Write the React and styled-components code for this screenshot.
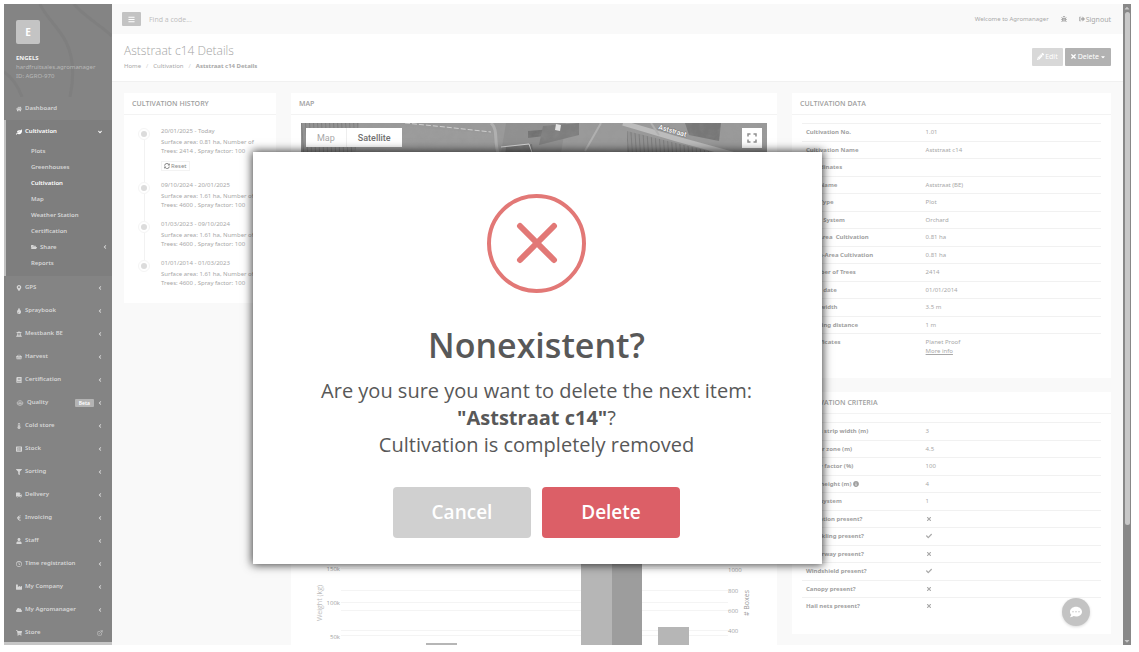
import React from "react";
import styled, { createGlobalStyle, css } from "styled-components";
import {
  FaHome,
  FaLeaf,
  FaFolderOpen,
  FaMapMarkerAlt,
  FaTint,
  FaUniversity,
  FaShoppingBasket,
  FaBook,
  FaThermometerHalf,
  FaListAlt,
  FaFilter,
  FaTruck,
  FaEuroSign,
  FaUser,
  FaRegClock,
  FaIndustry,
  FaCloud,
  FaShoppingCart,
  FaAngleLeft,
  FaAngleDown,
  FaBars,
  FaBug,
  FaSignOutAlt,
  FaPencilAlt,
  FaTimes,
  FaCheck,
  FaCaretDown,
  FaCaretUp,
  FaSyncAlt,
  FaInfoCircle,
  FaCommentDots,
} from "react-icons/fa";
import { FiExternalLink } from "react-icons/fi";

const GlobalStyle = createGlobalStyle`
  *,
  *::before {
    box-sizing: border-box;
  }

  body {
    margin: 0;
    background: #fff;
    color: #a8a8a8;
    font-family: "Noto Sans", "Open Sans", sans-serif;
    font-size: 6px;
    line-height: 9px;
  }

  button,
  input {
    font-family: inherit;
  }

  a {
    color: inherit;
    text-decoration: none;
  }
`;

const Frame = styled.div`
  position: relative;
  display: flex;
  height: calc(100vh - 11px);
  margin: 4px 8px 7px 4px;
  overflow: hidden;
`;

/* ---------- sidebar ---------- */

const Sidebar = styled.aside`
  display: flex;
  flex-direction: column;
  flex: 0 0 108px;
  background: #848484;
  border-bottom: 3px solid #c6c6c6;
  overflow: hidden;
`;

const Profile = styled.div`
  position: relative;
  flex: 0 0 93px;
  padding: 16px 12px 0;
  color: #b8b8b8;
`;

const ProfilePattern = styled.svg`
  position: absolute;
  inset: 0;
  width: 100%;
  height: 100%;
`;

const ProfileText = styled.div`
  position: relative;
`;

const Avatar = styled.div`
  width: 24px;
  height: 24px;
  margin-bottom: 10px;
  border-radius: 2px;
  background: #c4c4c4;
  color: #fff;
  font-size: 10px;
  font-weight: 700;
  line-height: 24px;
  text-align: center;
`;

const ProfileName = styled.div`
  color: #f4f4f4;
  font-weight: 700;
`;

const Nav = styled.nav`
  flex: 1;
  overflow: hidden;
  font-weight: 600;
`;

const NavGroup = styled.div`
  padding-bottom: 5px;
  background: #7e7e7e;
  box-shadow: inset 2px 0 0 #c0c0c0;
`;

const NavLink = styled.a`
  display: flex;
  align-items: center;
  gap: 3px;
  height: ${(p) => (p.$sub ? "16px" : "23px")};
  padding: ${(p) => (p.$sub ? "0 4px 0 27px" : "0 9px 0 12px")};
  color: ${(p) => (p.$active ? "#fff" : "#d6d6d6")};

  svg {
    flex: none;
    width: auto;
    height: 6px;
  }
`;

const NavLabel = styled.span`
  flex: 1;
`;

const Badge = styled.span`
  padding: 0 4px;
  border-radius: 1px;
  background: #b4b4b4;
  color: #fff;
  font-size: 5px;
  line-height: 8px;
`;

/* ---------- main ---------- */

const Main = styled.main`
  display: flex;
  flex-direction: column;
  flex: 1;
  min-width: 0;
  background: #f9f9f9;
  overflow: hidden;
`;

const TopBar = styled.header`
  display: flex;
  align-items: center;
  flex: 0 0 30px;
  gap: 12px;
  padding: 0 12px 0 10px;
`;

const MenuButton = styled.button`
  display: grid;
  place-items: center;
  width: 19px;
  height: 14px;
  margin-right: -4px;
  padding: 0;
  border: 0;
  border-radius: 1px;
  background: #c3c3c3;
  color: #fff;
  font-size: 7px;
`;

const Search = styled.input`
  flex: 1;
  min-width: 0;
  padding: 0;
  border: 0;
  background: none;
  font-family: "Open Sans", sans-serif;
  font-size: 7px;

  &::placeholder {
    color: #bdbdbd;
  }
`;

const TopLink = styled.a`
  display: flex;
  align-items: center;
  gap: 1px;
  font-size: 7px;

  svg {
    font-size: 6px;
  }
`;

const PageHead = styled.div`
  display: flex;
  align-items: center;
  justify-content: space-between;
  flex: 0 0 48px;
  padding: 0 12px 2px;
  background: #fff;
  border-bottom: 1px solid #f1f1f1;
`;

const PageTitle = styled.h1`
  margin: 0 0 3px;
  color: #a4a4a4;
  font-family: "Open Sans", sans-serif;
  font-size: 12px;
  font-weight: 300;
  line-height: 16px;
`;

const Crumbs = styled.ol`
  display: flex;
  gap: 5px;
  margin: 0;
  padding: 0;
  list-style: none;

  li + li::before {
    content: "/";
    margin-right: 5px;
    color: #d0d0d0;
  }
`;

const Actions = styled.div`
  display: flex;
  gap: 2px;
`;

const ActionButton = styled.button`
  display: flex;
  align-items: center;
  gap: 1px;
  height: 18px;
  padding: 0 5px;
  border: 0;
  border-radius: 1px;
  background: ${(p) => (p.$light ? "#d8d8d8" : "#b2b2b2")};
  color: #fff;
  font-size: 7px;
`;

const Columns = styled.div`
  display: grid;
  grid-template-columns: 152fr 486fr 319fr;
  align-items: start;
  gap: 15px;
  padding: 11px 12px 0;
`;

const Column = styled.div`
  display: grid;
  gap: 14px;
  min-width: 0;
`;

const Panel = styled.section`
  background: #fff;
`;

const ChartPanel = styled(Panel)`
  padding-top: 22px;
`;

const PanelTitle = styled.h2`
  margin: 0;
  padding: 0 8px;
  border-bottom: 1px solid #f3f3f3;
  color: #a0a0a0;
  font-family: "Open Sans", sans-serif;
  font-size: 7px;
  font-weight: 600;
  line-height: 21px;
`;

/* ---------- history ---------- */

const Timeline = styled.ul`
  position: relative;
  margin: 0;
  padding: 11px 7px 6px 37px;
  list-style: none;

  &::before {
    content: "";
    position: absolute;
    top: 19px;
    bottom: 40px;
    left: 20px;
    width: 1px;
    background: #f2f2f2;
  }
`;

const TimelineItem = styled.li`
  position: relative;
  padding-bottom: 9px;

  &::before {
    content: "";
    position: absolute;
    top: 2px;
    left: -23px;
    width: 12px;
    height: 12px;
    border: 3px solid #fff;
    border-radius: 50%;
    outline: 1px solid #f5f5f5;
    outline-offset: -1px;
    background: #dcdcdc;
  }
`;

const TimelineDate = styled.div`
  margin-bottom: 1px;
  line-height: 11px;
`;

const TimelineText = styled.div`
  white-space: nowrap;
`;

const ResetButton = styled.button`
  display: flex;
  align-items: center;
  gap: 1px;
  height: 10px;
  margin-top: 5px;
  padding: 0 2px;
  border: 1px solid #f3f3f3;
  background: #fff;
  color: #8c8c8c;
  font-size: 6px;
  line-height: 8px;
`;

/* ---------- map ---------- */

const MapBox = styled.div`
  position: relative;
  height: 246px;
  margin: 8px 10px 10px;
  background: #8a8a8a;
  overflow: hidden;
`;

const MapImage = styled.svg`
  display: block;
  width: 100%;
`;

const MapTypes = styled.div`
  position: absolute;
  top: 5px;
  left: 5px;
  display: flex;
  background: #fff;
`;

const MapTypeButton = styled.button`
  height: 19px;
  padding: 0 11px;
  border: 0;
  border-left: ${(p) => (p.$on ? "1px solid #eee" : "0")};
  background: #fff;
  color: ${(p) => (p.$on ? "#707070" : "#a8a8a8")};
  font-family: Roboto, sans-serif;
  font-size: 9px;
  font-weight: ${(p) => (p.$on ? 500 : 400)};
`;

const FullscreenButton = styled.button`
  position: absolute;
  top: 5px;
  right: 5px;
  display: grid;
  place-items: center;
  width: 20px;
  height: 20px;
  padding: 0;
  border: 0;
  background: #fff;
`;

const Chart = styled.svg`
  display: block;
  width: 100%;
  font-family: "Open Sans", sans-serif;
`;

/* ---------- tables ---------- */

const DataTable = styled.table`
  width: calc(100% - 20px);
  margin: 8px 10px 0;
  border-collapse: collapse;

  tr {
    height: 18px;
    border-top: 1px solid #f1f1f1;
  }

  tr:nth-child(even) {
    height: 17px;
  }

  th {
    width: 40%;
    padding: 4px 4px 3px;
    color: #9f9f9f;
    font-weight: 700;
    text-align: left;
    vertical-align: top;
    white-space: pre;
  }

  td {
    padding: 4px 4px 3px;
    vertical-align: top;
  }

  svg {
    vertical-align: middle;
  }
`;

const PanelFoot = styled.div`
  height: ${(p) => (p.$tall ? "19px" : "18px")};
`;

const MoreLink = styled.a`
  display: block;
  text-decoration: underline;
`;

const ChatButton = styled.button`
  position: absolute;
  right: 41px;
  bottom: 19px;
  display: grid;
  place-items: center;
  width: 28px;
  height: 28px;
  padding: 0;
  border: 0;
  border-radius: 50%;
  background: #c3c3c3;
  box-shadow: 0 1px 3px rgba(0, 0, 0, 0.15);
  color: #fff;
  font-size: 12px;
`;

/* ---------- scrollbar ---------- */

const ScrollTrack = styled.div`
  display: flex;
  flex-direction: column;
  align-items: center;
  flex: 0 0 7px;
  background: #888;
  color: #c8c8c8;
  font-size: 8px;
`;

const ScrollThumb = styled.div`
  flex: 0 0 80%;
  width: 5px;
  margin-bottom: auto;
  border-radius: 3px;
  background: #c8c8c8;
`;

/* ---------- dialog ---------- */

const Overlay = styled.div`
  position: absolute;
  inset: 0;
  display: flex;
  align-items: center;
  justify-content: center;
  padding: 66px 60px 0 0;
`;

const Dialog = styled.div`
  display: flex;
  flex-direction: column;
  align-items: center;
  width: 569px;
  max-width: 100%;
  padding: 42px 22px 26px 20px;
  background: #fff;
  box-shadow: 0 0 9px 1px rgba(0, 0, 0, 0.75);
  color: #585858;
  font-family: "Open Sans", sans-serif;
  text-align: center;
`;

const DialogIcon = styled.svg`
  width: 99px;
  height: 99px;
  margin-bottom: 27px;
`;

const DialogTitle = styled.h2`
  margin: 0 0 7px;
  font-size: 34px;
  font-weight: 600;
  line-height: 50px;
`;

const DialogText = styled.p`
  margin: 0 0 29px;
  font-size: 20px;
  line-height: 27px;
`;

const DialogButtons = styled.div`
  display: flex;
  gap: 11px;
`;

const DialogButton = styled.button`
  width: 138px;
  height: 51px;
  border: 0;
  border-radius: 4px;
  color: #fff;
  font-size: 19px;
  font-weight: 600;
  ${(p) =>
    p.$danger
      ? css`
          background: #dc5f67;
        `
      : css`
          background: #d0d0d0;
        `}
`;

const WheelIcon = () => (
  <svg viewBox="0 0 16 12" fill="none" stroke="currentColor" aria-hidden="true">
    <circle cx="8" cy="6" r="5" strokeWidth="1" />
    <path d="M8 1v10M1 6h14M3 9l5-3 5 3" strokeWidth="1" />
  </svg>
);

const subItems = [
  { label: "Plots" },
  { label: "Greenhouses" },
  { label: "Cultivation", active: true },
  { label: "Map" },
  { label: "Weather Station" },
  { label: "Certification" },
  { label: "Share", icon: FaFolderOpen },
  { label: "Reports" },
];

const navItems = [
  { label: "GPS", icon: FaMapMarkerAlt },
  { label: "Spraybook", icon: FaTint },
  { label: "Mestbank BE", icon: FaUniversity },
  { label: "Harvest", icon: FaShoppingBasket },
  { label: "Certification", icon: FaBook },
  { label: "Quality", icon: WheelIcon, badge: "Beta" },
  { label: "Cold store", icon: FaThermometerHalf },
  { label: "Stock", icon: FaListAlt },
  { label: "Sorting", icon: FaFilter },
  { label: "Delivery", icon: FaTruck },
  { label: "Invoicing", icon: FaEuroSign },
  { label: "Staff", icon: FaUser },
  { label: "Time registration", icon: FaRegClock },
  { label: "My Company", icon: FaIndustry },
  { label: "My Agromanager", icon: FaCloud },
  { label: "Store", icon: FaShoppingCart, external: true },
];

const history = [
  { date: "20/01/2025 - Today", area: "0.81", trees: "2414", reset: true },
  { date: "09/10/2024 - 20/01/2025", area: "1.61", trees: "4600" },
  { date: "01/03/2023 - 09/10/2024", area: "1.61", trees: "4600" },
  { date: "01/01/2014 - 01/03/2023", area: "1.61", trees: "4600" },
];

const cultivationData = [
  ["Cultivation No.", "1.01"],
  ["Cultivation Name", "Aststraat c14"],
  ["Coordinates", ""],
  ["Plot Name", "Aststraat (BE)"],
  ["Plot Type", "Plot"],
  ["Plant System", "Orchard"],
  ["Net Area  Cultivation", "0.81 ha"],
  ["Gross-Area Cultivation", "0.81 ha"],
  ["Number of Trees", "2414"],
  ["Plant date", "01/01/2014"],
  ["Row width", "3.5 m"],
  ["Planting distance", "1 m"],
];

const criteria = [
  ["Grass strip width (m)", "3"],
  ["Buffer zone (m)", "4.5"],
  ["Spray factor (%)", "100"],
  ["Tree height (m) ", "4", true],
  ["Row system", "1"],
  ["Irrigation present?", false],
  ["Sprinkling present?", true],
  ["Waterway present?", false],
  ["Windshield present?", true],
  ["Canopy present?", false],
  ["Hail nets present?", false],
];

const SideMenu = () => (
  <Sidebar>
    <Profile>
      <ProfilePattern viewBox="0 0 108 93" preserveAspectRatio="none" aria-hidden="true">
        <g fill="none" stroke="#7f7f7f" strokeWidth="3">
          <path d="M36 0c6 14 18 22 26 38s8 36 4 55" />
          <path d="M70 0c10 12 22 18 38 32" />
          <path d="M0 68c9 6 14 14 18 25" />
        </g>
      </ProfilePattern>
      <ProfileText>
        <Avatar>E</Avatar>
        <ProfileName>ENGELS</ProfileName>
        <div>hardfruitsales.agromanager</div>
        <div>ID: AGRO-970</div>
      </ProfileText>
    </Profile>
    <Nav>
      <NavLink href="#dashboard">
        <FaHome />
        <NavLabel>Dashboard</NavLabel>
      </NavLink>
      <NavGroup>
        <NavLink href="#cultivation" $active>
          <FaLeaf />
          <NavLabel>Cultivation</NavLabel>
          <FaAngleDown />
        </NavLink>
        {subItems.map(({ label, icon: Icon, active }) => (
          <NavLink key={label} href="#sub" $sub $active={active}>
            {Icon && <Icon />}
            <NavLabel>{label}</NavLabel>
            {Icon && <FaAngleLeft />}
          </NavLink>
        ))}
      </NavGroup>
      {navItems.map(({ label, icon: Icon, badge, external }) => (
        <NavLink key={label} href="#nav">
          <Icon />
          <NavLabel>{label}</NavLabel>
          {badge && <Badge>{badge}</Badge>}
          {external ? <FiExternalLink /> : <FaAngleLeft />}
        </NavLink>
      ))}
    </Nav>
  </Sidebar>
);

const SatelliteImage = () => (
  <MapImage viewBox="0 0 466 246" aria-hidden="true">
    <defs>
      <pattern id="rows" width="4" height="8" patternUnits="userSpaceOnUse" patternTransform="rotate(-4)">
        <rect width="4" height="8" fill="#929292" />
        <rect width="1" height="8" fill="#7c7c7c" />
      </pattern>
      <filter id="grain">
        <feTurbulence type="fractalNoise" baseFrequency="0.12" numOctaves="4" />
        <feColorMatrix values="0 0 0 0 0.3  0 0 0 0 0.3  0 0 0 0 0.3  1.6 0 0 0 -0.6" />
      </filter>
    </defs>
    <rect width="466" height="246" fill="#9a9a9a" />
    <path d="M0 0h58l-8 60H0z" fill="url(#rows)" />
    <path d="M100 3l92 8 4 40H70z" fill="#9c9c9c" />
    <path d="M205 0h60l-10 60h-60z" fill="#909090" />
    <path d="M227 8l24-2v6l-24 3z" fill="#707070" />
    <path d="M242 3l36-3v12l-40 10z" fill="#7e7e7e" />
    <path d="M205 24l26-3 4 40h-34z" fill="#7a7a7a" />
    <path d="M326 8l106 26v30h-106z" fill="url(#rows)" />
    <path d="M384 0h36l-2 18-30-6z" fill="#777" />
    <rect width="466" height="246" filter="url(#grain)" opacity="0.4" />
    <path d="M104 0l40 4 46 5" fill="none" stroke="#cfcfcf" strokeWidth="1" strokeDasharray="5 2" />
    <path d="M190 0c8 8 2 16 8 34" fill="none" stroke="#b0b0b0" strokeWidth="3" />
    <path d="M200 24l28-3 5 14" fill="none" stroke="#d9d9d9" strokeWidth="1" />
    <path d="M322 0l54 16 80 22" fill="none" stroke="#bcbcbc" strokeWidth="5" />
    <path d="M350 0l8 12M300 0l-16 28" fill="none" stroke="#b0b0b0" strokeWidth="2" />
    <path d="M255 1l5 1-1 6-5-1z" fill="#e4e4e4" />
    <text
      x="357"
      y="6"
      transform="rotate(16 357 6)"
      fill="#fff"
      stroke="#777"
      strokeWidth="1"
      paintOrder="stroke"
      fontSize="7"
      fontFamily="Roboto, sans-serif"
      fontWeight="500"
    >
      Aststraat
    </text>
  </MapImage>
);

const YieldChart = () => (
  <Chart viewBox="0 0 486 260" role="img" aria-label="Weight and boxes">
    <path
      d="M50 153.5h387M50 175.5h387M50 187.5h387M50 195.5h387M50 215.5h387M50 220.5h387"
      stroke="#f4f4f4"
      strokeWidth="1"
    />
    <g fill="#b6b6b6">
      <rect x="135" y="228" width="31" height="32" />
      <rect x="290" y="20" width="31" height="240" />
      <rect x="367" y="212" width="31" height="48" />
    </g>
    <rect x="321" y="50" width="30" height="210" fill="#9d9d9d" />
    <g fill="#a3a3a3" fontSize="6" textAnchor="end">
      <text x="49" y="156">150k</text>
      <text x="49" y="190">100k</text>
      <text x="49" y="224">50k</text>
    </g>
    <g fill="#a3a3a3" fontSize="6">
      <text x="437" y="157">1000</text>
      <text x="437" y="178">800</text>
      <text x="437" y="198">600</text>
      <text x="437" y="218">400</text>
    </g>
    <g fontSize="7" textAnchor="middle">
      <text transform="translate(31 188) rotate(-90)" fill="#bcbcbc">
        Weight (kg)
      </text>
      <text transform="translate(458 188) rotate(-90)" fill="#999">
        # Boxes
      </text>
    </g>
  </Chart>
);

const App = () => {
  return (
    <>
      <GlobalStyle />
      <Frame>
        <SideMenu />
        <Main>
          <TopBar>
            <MenuButton aria-label="Toggle menu">
              <FaBars />
            </MenuButton>
            <Search type="text" placeholder="Find a code..." aria-label="Find a code" />
            <span>Welcome to Agromanager</span>
            <TopLink href="#bug" aria-label="Report a bug">
              <FaBug />
            </TopLink>
            <TopLink href="#signout">
              <FaSignOutAlt />
              Signout
            </TopLink>
          </TopBar>
          <PageHead>
            <div>
              <PageTitle>Aststraat c14 Details</PageTitle>
              <Crumbs>
                <li>
                  <a href="#home">Home</a>
                </li>
                <li>
                  <a href="#cultivation">Cultivation</a>
                </li>
                <li>
                  <strong>Aststraat c14 Details</strong>
                </li>
              </Crumbs>
            </div>
            <Actions>
              <ActionButton $light>
                <FaPencilAlt /> Edit
              </ActionButton>
              <ActionButton>
                <FaTimes /> Delete <FaCaretDown size={6} />
              </ActionButton>
            </Actions>
          </PageHead>
          <Columns>
            <Panel>
              <PanelTitle>CULTIVATION HISTORY</PanelTitle>
              <Timeline>
                {history.map((item) => (
                  <TimelineItem key={item.date}>
                    <TimelineDate>{item.date}</TimelineDate>
                    <TimelineText>
                      Surface area: {item.area} ha, Number of
                      <br />
                      Trees: {item.trees} , Spray factor: 100
                    </TimelineText>
                    {item.reset && (
                      <ResetButton>
                        <FaSyncAlt /> Reset
                      </ResetButton>
                    )}
                  </TimelineItem>
                ))}
              </Timeline>
            </Panel>
            <Column>
              <Panel>
                <PanelTitle>MAP</PanelTitle>
                <MapBox>
                  <SatelliteImage />
                  <MapTypes>
                    <MapTypeButton>Map</MapTypeButton>
                    <MapTypeButton $on>Satellite</MapTypeButton>
                  </MapTypes>
                  <FullscreenButton aria-label="Fullscreen">
                    <svg width="10" height="10" viewBox="0 0 10 10" fill="none" stroke="#909090" strokeWidth="1.5">
                      <path d="M1 3.5V1h2.500M6.5 1H9v2.500M9 6.5V9H6.5M3.500 9H1V6.5" />
                    </svg>
                  </FullscreenButton>
                </MapBox>
              </Panel>
              <ChartPanel>
                <YieldChart />
              </ChartPanel>
            </Column>
            <Column>
              <Panel>
                <PanelTitle>CULTIVATION DATA</PanelTitle>
                <DataTable>
                  <tbody>
                    {cultivationData.map(([label, value]) => (
                      <tr key={label}>
                        <th scope="row">{label}</th>
                        <td>{value}</td>
                      </tr>
                    ))}
                    <tr>
                      <th scope="row">Certificates</th>
                      <td>
                        Planet Proof
                        <MoreLink href="#more">More info</MoreLink>
                      </td>
                    </tr>
                  </tbody>
                </DataTable>
                <PanelFoot $tall />
              </Panel>
              <Panel>
                <PanelTitle>CULTIVATION CRITERIA</PanelTitle>
                <DataTable>
                  <tbody>
                    {criteria.map(([label, value, info]) => (
                      <tr key={label}>
                        <th scope="row">
                          {label}
                          {info && <FaInfoCircle />}
                        </th>
                        <td>
                          {value === true && <FaCheck aria-label="Yes" />}
                          {value === false && <FaTimes aria-label="No" />}
                          {typeof value === "string" && value}
                        </td>
                      </tr>
                    ))}
                  </tbody>
                </DataTable>
                <PanelFoot />
              </Panel>
            </Column>
          </Columns>
        </Main>
        <ScrollTrack aria-hidden="true">
          <FaCaretUp />
          <ScrollThumb />
          <FaCaretDown />
        </ScrollTrack>
        <ChatButton aria-label="Chat">
          <FaCommentDots />
        </ChatButton>
        <Overlay>
          <Dialog role="alertdialog" aria-labelledby="dialog-title">
            <DialogIcon viewBox="0 0 99 99" fill="none" stroke="#e27876" aria-hidden="true">
              <circle cx="49.5" cy="49.5" r="47.5" strokeWidth="4" />
              <path d="M33 32l34 34M67 32L33 66" strokeWidth="6" strokeLinecap="round" />
            </DialogIcon>
            <DialogTitle id="dialog-title">Nonexistent?</DialogTitle>
            <DialogText>
              Are you sure you want to delete the next item:
              <br />
              <strong>"Aststraat c14"</strong>?
              <br />
              Cultivation is completely removed
            </DialogText>
            <DialogButtons>
              <DialogButton>Cancel</DialogButton>
              <DialogButton $danger>Delete</DialogButton>
            </DialogButtons>
          </Dialog>
        </Overlay>
      </Frame>
    </>
  );
};

export default App;
